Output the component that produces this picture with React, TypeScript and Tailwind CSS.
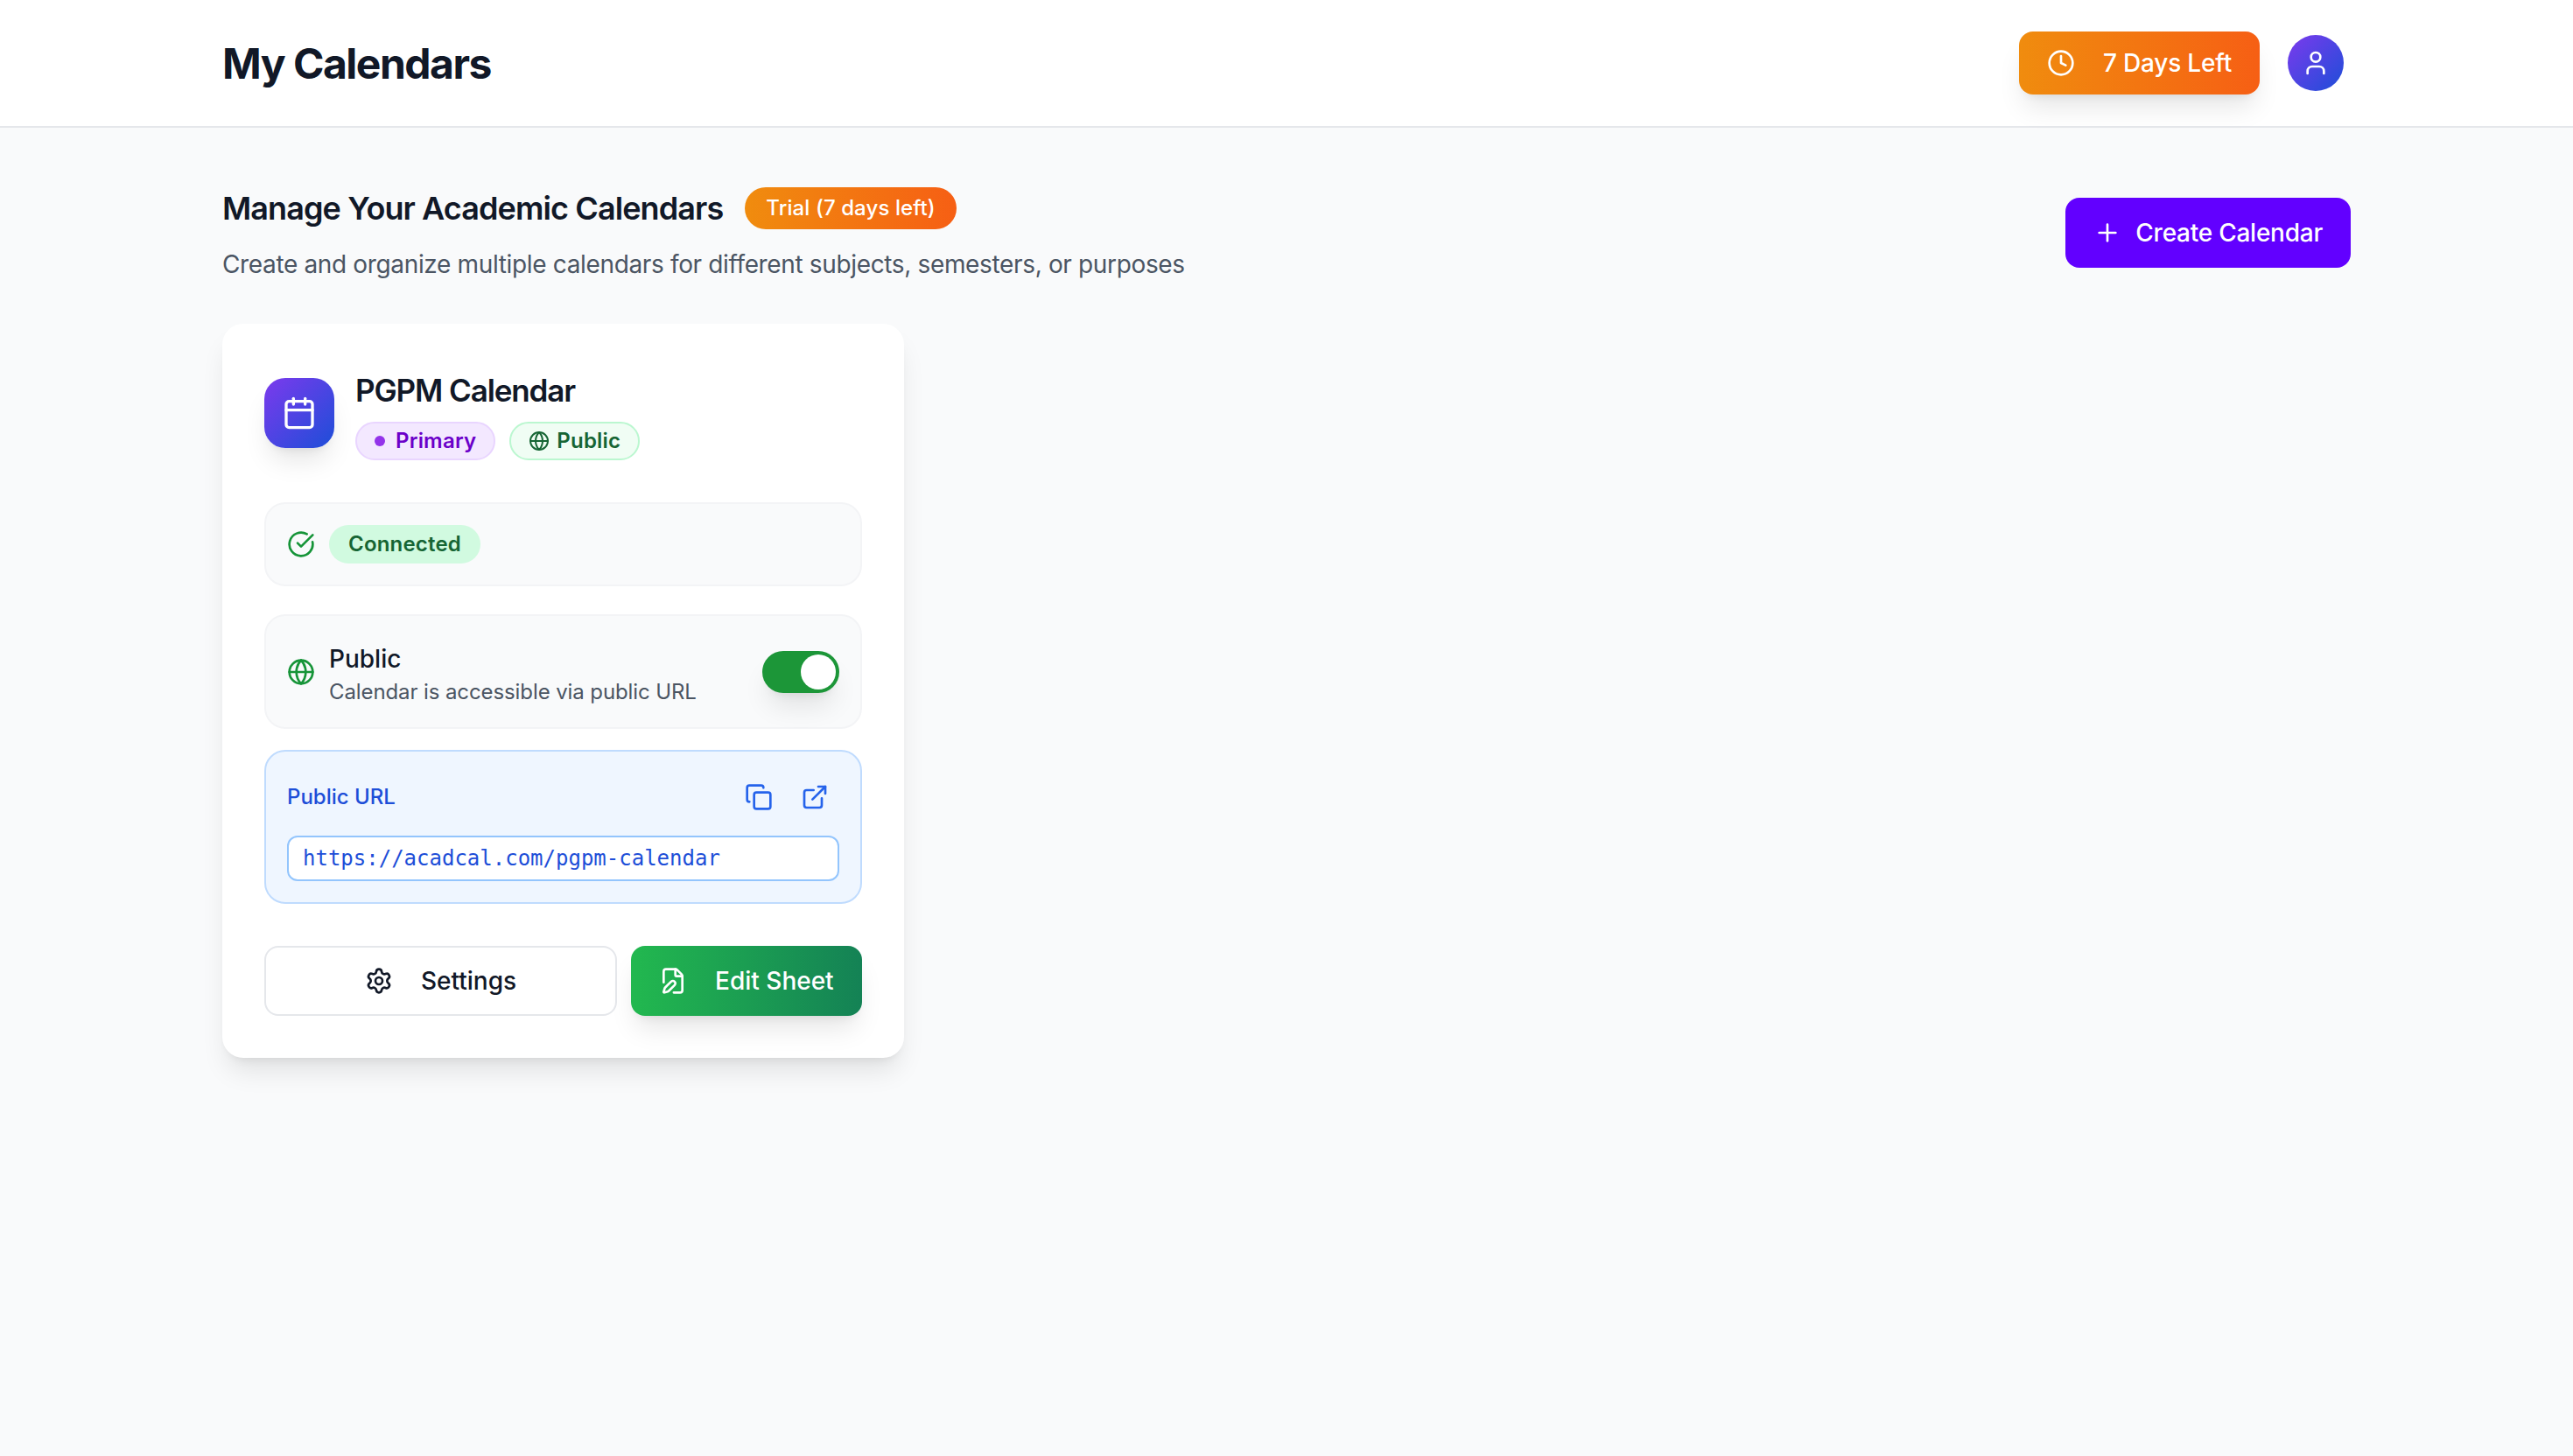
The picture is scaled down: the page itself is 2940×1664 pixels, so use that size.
import { Calendar, CircleCheckBig, Clock, Copy, ExternalLink, FilePen, Globe, Plus, Settings, User } from "lucide-react";

function App() {
  return (
    <div className="min-h-[1664px] bg-[#f9fafb] font-['Inter',sans-serif] text-[#111827]">
      <header className="flex h-[146px] items-center justify-between border-b-2 border-[#e5e7eb] bg-white pl-[254px] pr-[262px]">
        <h1 className="pt-[2px] text-[48px] leading-[64px] font-bold tracking-[-1.5px]">My Calendars</h1>
        <div className="flex items-center gap-8">
          <button className="flex h-[72px] items-center gap-8 rounded-2xl bg-linear-to-r/srgb from-[#f08c0e] to-[#f65f14] px-8 text-[28px] font-medium tracking-[-0.2px] text-white shadow-[0_20px_30px_-6px_rgb(0_0_0/0.1),0_8px_12px_-8px_rgb(0_0_0/0.1)]">
            <Clock size={32} />
            7 Days Left
          </button>
          <div className="flex h-16 w-16 items-center justify-center rounded-full bg-linear-to-br/srgb from-[#7c3aed] to-[#1d4ed8] text-white">
            <User size={32} />
          </div>
        </div>
      </header>

      <main className="px-[254px] pt-[64px]">
        <div className="mb-10 flex items-center justify-between">
          <div>
            <div className="flex items-center gap-[25px]">
              <h2 className="text-[36px] leading-[56px] font-semibold tracking-[-0.9px]">Manage Your Academic Calendars</h2>
              <span className="flex h-12 items-center rounded-full bg-linear-to-r/srgb from-[#f08c0e] to-[#f65f14] px-6 text-[24px] font-medium tracking-[0.1px] text-white">
                Trial (7 days left)
              </span>
            </div>
            <p className="mt-2 text-[28px] leading-[56px] tracking-[-0.35px] text-[#4b5563]">
              Create and organize multiple calendars for different subjects, semesters, or purposes
            </p>
          </div>
          <button className="mb-2 flex h-20 items-center gap-4 rounded-2xl bg-[#6200ff] px-8 text-[28px] font-medium tracking-[-0.25px] text-white">
            <Plus size={32} />
            Create Calendar
          </button>
        </div>

        <div className="grid grid-cols-3 gap-12">
          <div className="rounded-3xl bg-white p-12 shadow-[0_20px_30px_-6px_rgb(0_0_0/0.1),0_8px_12px_-8px_rgb(0_0_0/0.1)]">
            <div className="mb-12 flex items-center gap-6">
              <div className="flex h-20 w-20 items-center justify-center rounded-3xl bg-linear-to-br/srgb from-[#7c3aed] to-[#1d4ed8] text-white shadow-[0_20px_30px_-6px_rgb(0_0_0/0.1),0_8px_12px_-8px_rgb(0_0_0/0.1)]">
                <Calendar size={40} />
              </div>
              <div>
                <h3 className="text-[35px] leading-[56px] font-semibold tracking-[-1.1px]">PGPM Calendar</h3>
                <div className="mt-2 flex items-center gap-4">
                  <span className="flex h-11 items-center gap-3 rounded-full border-2 border-[#e9d5ff] bg-[#f3e8ff] px-5 text-[24px] font-semibold tracking-[0.2px] text-[#6b00c9]">
                    <span className="h-3 w-3 rounded-full bg-[#9333ea]" />
                    Primary
                  </span>
                  <span className="flex h-11 items-center gap-2 rounded-full border-2 border-[#bbf7d0] bg-[#f0fdf4] px-5 text-[24px] font-semibold tracking-[0.2px] text-[#166534]">
                    <Globe size={24} />
                    Public
                  </span>
                </div>
              </div>
            </div>

            <div className="mb-8 flex h-24 items-center gap-4 rounded-3xl border-2 border-[#f3f4f6] bg-[#f9fafb] px-6">
              <CircleCheckBig size={32} className="text-[#169438]" />
              <span className="flex h-11 items-center rounded-full bg-[#d1fae0] px-[22px] text-[24px] font-semibold tracking-[0.2px] text-[#166534]">Connected</span>
            </div>

            <div className="mb-6 flex h-[131px] items-center justify-between rounded-3xl border-2 border-[#f3f4f6] bg-[#f9fafb] px-6">
              <div className="flex items-center gap-4">
                <Globe size={32} className="text-[#169438]" />
                <div className="pt-[5px]">
                  <div className="text-[28px] leading-[40px] font-medium">Public</div>
                  <div className="mt-[2px] text-[24px] leading-[32px] tracking-[-0.1px] text-[#4b5563]">Calendar is accessible via public URL</div>
                </div>
              </div>
              <div className="flex h-12 w-[88px] items-center justify-end rounded-full bg-[#1c9638] pr-1 shadow-[0_20px_30px_-6px_rgb(0_0_0/0.1),0_8px_12px_-8px_rgb(0_0_0/0.1)]">
                <span className="h-10 w-10 rounded-full bg-white" />
              </div>
            </div>

            <div className="mb-12 rounded-3xl border-2 border-[#bfdbfe] bg-[#eff6ff] px-6 pt-6 pb-6">
              <div className="mb-4 flex h-14 items-center justify-between">
                <span className="text-[24px] font-medium text-[#1d4ed8]">Public URL</span>
                <div className="flex items-center gap-2 text-[#2563eb]">
                  <button className="p-3"><Copy size={32} /></button>
                  <button className="p-3"><ExternalLink size={32} /></button>
                </div>
              </div>
              <div className="flex h-[52px] items-center rounded-xl border-2 border-[#93c5fd] bg-white px-4 font-['DejaVu_Sans_Mono',monospace] text-[24px] text-[#1d4ed8]">
                https://acadcal.com/pgpm-calendar
              </div>
            </div>

            <div className="flex gap-4">
              <button className="flex h-20 flex-1 items-center justify-center gap-8 rounded-2xl border-2 border-[#e5e7eb] bg-white text-[28px] font-medium">
                <Settings size={32} />
                Settings
              </button>
              <button className="flex h-20 items-center gap-8 rounded-2xl bg-linear-to-r/srgb from-[#22b84f] to-[#148255] px-8 text-[28px] font-medium text-white shadow-[0_20px_30px_-6px_rgb(0_0_0/0.1),0_8px_12px_-8px_rgb(0_0_0/0.1)]">
                <FilePen size={32} />
                Edit Sheet
              </button>
            </div>
          </div>
        </div>
      </main>
    </div>
  );
}

export default App;
